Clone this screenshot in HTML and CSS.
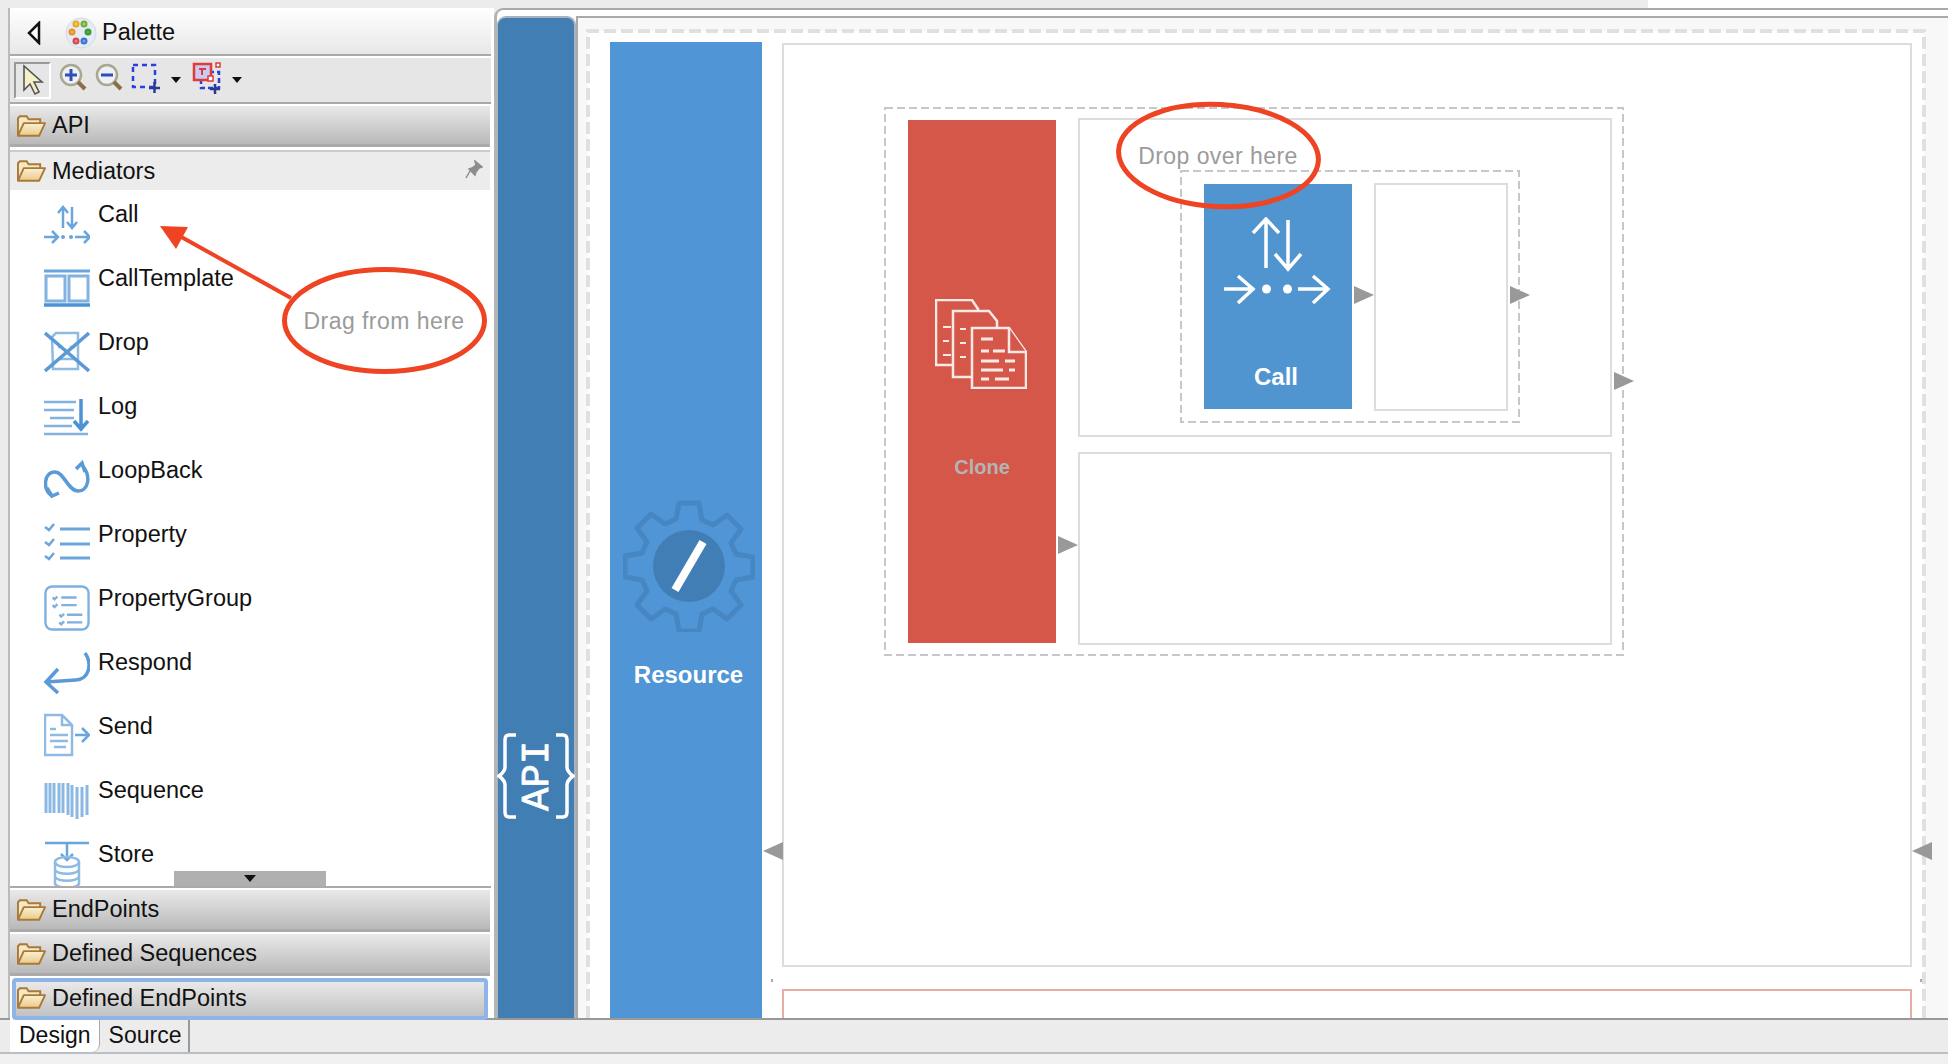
FILE: index.html
```html
<!DOCTYPE html>
<html lang="en">
<head>
    <meta charset="UTF-8" />
    <title>Developer Studio - API Design</title>
    <link rel="stylesheet" href="styles.css">
</head>
<body>

    <svg class="icon-defs" width="0" height="0">
        <defs>
            <linearGradient id="folderFill" x1="0" y1="0" x2="0" y2="1">
                <stop offset="0" stop-color="#fbf1d2"/>
                <stop offset="1" stop-color="#eac98a"/>
            </linearGradient>
            <symbol id="folder" viewBox="0 0 30 24">
                <path d="M1 22V4l2-2h7l2 3h12v4" fill="#f6e8c0" stroke="#a9793a" stroke-width="2"/>
                <path d="M1 22l6-13h22l-6 13z" fill="url(#folderFill)" stroke="#a9793a" stroke-width="2" stroke-linejoin="round"/>
            </symbol>
        </defs>
    </svg>

    <div class="top-strip"><div class="top-strip-fill"></div></div>

    <div class="workspace">
        <aside class="palette">
            <div class="palette-head">
                <svg class="back-arrow" width="14" height="24" viewBox="0 0 14 24"><path d="M12 2v20L2 12z" fill="#fff" stroke="#111" stroke-width="2.500"/></svg>
                <svg class="palette-logo" width="32" height="32" viewBox="0 0 32 32">
                    <circle cx="16" cy="16" r="15" fill="#e6ecf3" stroke="#d3dae2"/>
                    <circle cx="11" cy="7" r="2.500" fill="#f0d060" stroke="#e8a820" stroke-width="2"/>
                    <circle cx="19" cy="7" r="2.500" fill="#a8d070" stroke="#6fae3a" stroke-width="2"/>
                    <circle cx="7" cy="15" r="2.500" fill="#f0b060" stroke="#e8902a" stroke-width="2"/>
                    <circle cx="23" cy="15" r="2.500" fill="#50b040" stroke="#3d9a3a" stroke-width="2"/>
                    <circle cx="11" cy="24" r="2.500" fill="#e88080" stroke="#d04a4a" stroke-width="2"/>
                    <circle cx="19" cy="24" r="2.500" fill="#70a0e8" stroke="#3a74d0" stroke-width="2"/>
                </svg>
                <span>Palette</span>
            </div>
            <div class="palette-tools">
                <div class="tool tool-active">
                    <svg width="24" height="32" viewBox="0 0 24 32"><path d="M3 2v24l6-6 5 10 4-2-5-10h8z" fill="#f4f0c8" stroke="#555" stroke-width="1.600"/></svg>
                </div>
                <svg class="tool-icon" width="28" height="30" viewBox="0 0 28 30">
                    <circle cx="12" cy="12" r="10" fill="#eef0f6" stroke="#a8a88e" stroke-width="2.500"/>
                    <path d="M6 12h12M12 6v12" stroke="#2e4fb5" stroke-width="3"/>
                    <path d="M19 19l7 7" stroke="#8a7048" stroke-width="4"/>
                </svg>
                <svg class="tool-icon" width="28" height="30" viewBox="0 0 28 30">
                    <circle cx="12" cy="12" r="10" fill="#eef0f6" stroke="#a8a88e" stroke-width="2.500"/>
                    <path d="M6 12h12" stroke="#2e4fb5" stroke-width="3"/>
                    <path d="M19 19l7 7" stroke="#8a7048" stroke-width="4"/>
                </svg>
                <svg class="tool-icon" width="30" height="30" viewBox="0 0 30 30">
                    <rect x="2" y="2" width="22" height="22" fill="none" stroke="#2a3fe0" stroke-width="2.500" stroke-dasharray="5 4"/>
                    <path d="M18 25h11M23.500 19v11" stroke="#2a3a90" stroke-width="2.500"/>
                </svg>
                <span class="tool-caret"></span>
                <svg class="tool-icon" width="30" height="32" viewBox="0 0 30 32">
                    <rect x="9" y="10" width="18" height="16" fill="none" stroke="#2a3fe0" stroke-width="2.500" stroke-dasharray="5 3"/>
                    <rect x="2" y="2" width="17" height="16" fill="#c8ccf2" stroke="#e03a3a" stroke-width="2.500"/>
                    <path d="M7 7h7M10 7v6" stroke="#e03a3a" stroke-width="2"/>
                    <rect x="16" y="14" width="5" height="5" fill="#fff" stroke="#e03a3a" stroke-width="1.500"/>
                    <rect x="24" y="1" width="4" height="4" fill="#fff" stroke="#e03a3a" stroke-width="1.500"/>
                    <path d="M18 27h10M23 22v10" stroke="#2a3a90" stroke-width="2.500"/>
                </svg>
                <span class="tool-caret tool-caret-last"></span>
            </div>

            <div class="drawer drawer-first"><svg class="folder"><use href="#folder"/></svg>API</div>

            <div class="drawer drawer-open">
                <svg class="folder"><use href="#folder"/></svg>Mediators
                <svg class="pin" width="18" height="20" viewBox="0 0 18 20"><path d="M10 1l7 6-3 1-3 4-1 3-6-6 3-1 4-3zM5 11l-4 7" fill="#8d8d8d" stroke="#8d8d8d" stroke-width="1.500"/></svg>
            </div>

            <div class="mediators">
                <div class="mediator">
                    <svg class="mediator-icon" viewBox="0 0 46 46"><g stroke="#6aa5dc" stroke-width="2.500" fill="none">
                        <path d="M19 27V6M14 12l5-6 5 6M28 6v21M23 21l5 6 5-6"/>
                        <path d="M0 36h14M8 30l6 6-6 6M31 36h15M40 30l6 6-6 6"/>
                    </g><circle cx="19" cy="36" r="2" fill="#6aa5dc"/><circle cx="27" cy="36" r="2" fill="#6aa5dc"/></svg>
                    <span>Call</span>
                </div>
                <div class="mediator">
                    <svg class="mediator-icon" viewBox="0 0 46 46"><g fill="none" stroke="#82b2e0" stroke-width="3">
                        <path d="M0 6h46" stroke="#6aa5dc"/>
                        <rect x="2" y="11" width="19" height="25"/><rect x="25" y="11" width="19" height="25"/>
                        <path d="M0 40h46" stroke="#4d92d2" stroke-width="3.500"/>
                    </g></svg>
                    <span>CallTemplate</span>
                </div>
                <div class="mediator">
                    <svg class="mediator-icon" viewBox="0 0 46 46"><g fill="none" stroke="#8fbae2" stroke-width="2.500">
                        <path d="M8 8l4-4h22v36H9z"/><path d="M14 18h4M26 18h5M14 30h18"/>
                        <path d="M1 4l44 38M45 4L1 42" stroke="#5a9ad6" stroke-width="3.500"/>
                    </g></svg>
                    <span>Drop</span>
                </div>
                <div class="mediator">
                    <svg class="mediator-icon" viewBox="0 0 46 46"><g fill="none" stroke="#82b2e0" stroke-width="2.500">
                        <path d="M0 9h32M0 17h30M6 25h24M0 33h28M0 41h44"/>
                        <path d="M37 6v30M30 28l7 8 7-8" stroke="#4d92d2" stroke-width="3.500"/>
                    </g></svg>
                    <span>Log</span>
                </div>
                <div class="mediator">
                    <svg class="mediator-icon" viewBox="0 0 46 46"><g fill="none" stroke="#5a9ad6" stroke-width="3.500">
                        <path d="M8 39C-2 32 0 15 11 15c9 0 13 19 23 19 10 0 14-14 4-26"/>
                        <path d="M3 31l5 8 7-3M32 12l6-6 3 9"/>
                    </g></svg>
                    <span>LoopBack</span>
                </div>
                <div class="mediator">
                    <svg class="mediator-icon" viewBox="0 0 46 46"><g fill="none" stroke="#6aa5dc" stroke-width="3">
                        <path d="M16 8h30M16 23h30M16 37h30"/>
                        <path d="M1 6l4 3 5-6M1 21l4 3 5-6M1 35l4 3 5-6" stroke-width="2.500"/>
                    </g></svg>
                    <span>Property</span>
                </div>
                <div class="mediator">
                    <svg class="mediator-icon" viewBox="0 0 48 48"><rect x="1.500" y="1.500" width="45" height="45" rx="7" fill="none" stroke="#7fb0de" stroke-width="2.500"/>
                        <g fill="none" stroke="#7fb0de" stroke-width="2.500">
                            <path d="M18 13h16M18 21h16M24 31h16M24 39h16"/>
                            <path d="M9 13l2 2 3-3M9 21l2 2 3-3M16 31l2 2 3-3M16 39l2 2 3-3"/>
                        </g></svg>
                    <span>PropertyGroup</span>
                </div>
                <div class="mediator">
                    <svg class="mediator-icon" viewBox="0 0 46 46"><path d="M41 4C48 14 46 30 32 31L2 33M14 20L2 33l12 11" fill="none" stroke="#5a9ad6" stroke-width="3.500"/></svg>
                    <span>Respond</span>
                </div>
                <div class="mediator">
                    <svg class="mediator-icon" viewBox="0 0 46 46"><g fill="none" stroke="#8fbae2" stroke-width="2.500">
                        <path d="M1 2h17l10 10v30H1zM18 2v10h10"/>
                        <path d="M6 16h6M6 22h18M6 28h18M10 34h12"/>
                        <path d="M31 22h13M38 15l7 7-7 7" stroke="#6aa5dc"/>
                    </g></svg>
                    <span>Send</span>
                </div>
                <div class="mediator">
                    <svg class="mediator-icon" viewBox="0 0 46 46"><path d="M2 6v30M6 6v30M10 6v30M15 6v30M19 6v30M24 6v32M28 8v32M33 10v32M38 10v30M43 8v30" fill="none" stroke="#8ab8e2" stroke-width="3"/></svg>
                    <span>Sequence</span>
                </div>
                <div class="mediator">
                    <svg class="mediator-icon" viewBox="0 0 46 46"><g fill="none" stroke="#8fbae2" stroke-width="2.500">
                        <path d="M1 2h44" stroke="#6aa5dc"/>
                        <path d="M23 2v17M17 13l6 6 6-6" stroke="#6aa5dc"/>
                        <ellipse cx="23" cy="21" rx="12" ry="5"/>
                        <path d="M11 21v22c4 5 20 5 24 0V21M11 29c4 5 20 5 24 0M11 36c4 5 20 5 24 0"/>
                    </g></svg>
                    <span>Store</span>
                </div>
                <div class="mediators-scroll"><span></span></div>
            </div>

            <div class="drawer-stack">
                <div class="drawer"><svg class="folder"><use href="#folder"/></svg>EndPoints</div>
                <div class="drawer"><svg class="folder"><use href="#folder"/></svg>Defined Sequences</div>
                <div class="drawer drawer-focus"><svg class="folder"><use href="#folder"/></svg>Defined EndPoints</div>
            </div>
        </aside>

        <section class="editor">
            <div class="editor-body">
                <div class="api-band">
                    <svg class="api-mark" width="78" height="86" viewBox="0 0 78 86">
                        <path d="M19 2h-7c-3 0-4 2-4 5v27c0 4-2 6-6 9 4 3 6 5 6 9v27c0 3 1 5 4 5h7M59 2h7c3 0 4 2 4 5v27c0 4 2 6 6 9-4 3-6 5-6 9v27c0 3-1 5-4 5h-7" fill="none" stroke="#fff" stroke-width="3.500"/>
                        <text class="api-mark-text" transform="translate(51 78) rotate(-90)">API</text>
                    </svg>
                </div>
                <div class="canvas">
                    <svg class="canvas-dash" width="1360" height="1000">
                        <path d="M2 1000V13h1336v987" fill="none" stroke="#e0e0e0" stroke-width="4" stroke-dasharray="12 5"/>
                    </svg>

                    <div class="node resource">
                        <svg class="gear" width="132" height="132" viewBox="0 0 132 132">
                            <path d="M56 3h20l3 17 11 5 14-10 14 14-10 14 5 11 17 3v20l-17 3-5 11 10 14-14 14-14-10-11 5-3 17H56l-3-17-11-5-14 10-14-14 10-14-5-11-17-3V56l17-3 5-11-10-14 14-14 14 10 11-5z" fill="#5095d5" stroke="#4686c2" stroke-width="5" stroke-linejoin="round"/>
                            <circle cx="66" cy="66" r="36" fill="#417eb6"/>
                            <path d="M52 90l28-48" stroke="#fff" stroke-width="8"/>
                        </svg>
                        <span class="node-label">Resource</span>
                    </div>

                    <div class="box outer-box"></div>
                    <div class="box fault-box"></div>
                    <span class="tick tick-left"></span>
                    <span class="tick tick-right"></span>

                    <svg class="group-dash group-clone" width="740" height="549"><rect x="1" y="1" width="738" height="547" fill="none" stroke="#c4c8cc" stroke-width="2" stroke-dasharray="8 4"/></svg>

                    <div class="node clone">
                        <svg width="92" height="90" viewBox="0 0 92 90"><g fill="#d5574a" stroke="#fbe9e6" stroke-width="2.500">
                            <path d="M1 1h36l6 9v56H1z"/>
                            <path d="M18 12h36l8 10v56H18z"/>
                            <path d="M37 29h37l17 24v36H37z"/>
                            <path d="M74 29v24h17"/>
                            <path d="M8 28h8M8 42h6M8 56h8M25 30h6M25 44h6M25 58h6" stroke-width="2"/>
                            <path d="M46 40h12M46 52h8M58 52h12M46 62h18M70 62h10M46 71h22M74 71h6M46 80h8M60 80h14" stroke-width="3"/>
                        </g></svg>
                        <span class="node-label">Clone</span>
                    </div>

                    <div class="box branch-top"></div>
                    <div class="box branch-bottom"></div>

                    <svg class="group-dash group-call" width="340" height="253"><rect x="1" y="1" width="338" height="251" fill="none" stroke="#c4c8cc" stroke-width="2" stroke-dasharray="8 4"/></svg>

                    <div class="node call">
                        <svg width="110" height="90" viewBox="0 0 110 90"><g fill="none" stroke="#fff" stroke-width="3.500">
                            <path d="M43 51V2M30 16L43 2l13 14M65 3v49M52 37l13 15 13-15"/>
                            <path d="M1 72h30M15 59l15 13-15 14M75 72h30M90 59l15 13-15 14"/>
                        </g><circle cx="43.500" cy="72" r="4.500" fill="#fff"/><circle cx="64.500" cy="72" r="4.500" fill="#fff"/></svg>
                        <span class="node-label">Call</span>
                    </div>

                    <div class="box call-next"></div>

                    <span class="link-arrow arrow-right arrow-call"></span>
                    <span class="link-arrow arrow-right arrow-call-out"></span>
                    <span class="link-arrow arrow-right arrow-branch"></span>
                    <span class="link-arrow arrow-right arrow-clone"></span>
                    <span class="link-arrow arrow-left arrow-res-in"></span>
                    <span class="link-arrow arrow-left arrow-res-out"></span>
                </div>
            </div>
        </section>
    </div>

    <div class="tab-bar">
        <div class="tab tab-active">Design</div>
        <div class="tab">Source</div>
    </div>
    <div class="status-strip"></div>

    <!-- red notes drawn over the screenshot -->
    <svg class="notes" width="1948" height="1064" viewBox="0 0 1948 1064">
        <path d="M291 298L176 234" fill="none" stroke="#ee4423" stroke-width="4"/>
        <path d="M160 226l28 1-12 22z" fill="#ee4423"/>
        <ellipse cx="384.500" cy="320.500" rx="100" ry="51" fill="none" stroke="#ee4423" stroke-width="5"/>
        <ellipse cx="1218.500" cy="155.500" rx="100" ry="51" transform="rotate(3 1218.500 155.500)" fill="none" stroke="#ee4423" stroke-width="5"/>
        <text class="note-text" x="384" y="329" text-anchor="middle">Drag from here</text>
        <text class="note-text" x="1218" y="164" text-anchor="middle">Drop over here</text>
    </svg>

</body>
</html>
```

FILE: styles.css
```css
* {
    box-sizing: border-box;
}
html, body {
    margin: 0;
    padding: 0;
}
body {
    position: relative;
    width: 1948px;
    height: 1064px;
    overflow: hidden;
    background-color: #f0f0f0;
    font-family: 'Liberation Sans', Arial, sans-serif;
    color: #111;
}
.icon-defs {
    position: absolute;
}
.top-strip {
    display: flex;
    justify-content: flex-end;
    height: 8px;
    background-color: #ececec;
}
.top-strip-fill {
    width: 300px;
    background-color: #fff;
}
.workspace {
    display: flex;
    height: 1010px;
    background-color: #ececec;
}

/* palette */
.palette {
    display: flex;
    flex-direction: column;
    flex: none;
    width: 486px;
    margin-left: 8px;
    border-left: 2px solid #bbb;
    border-right: 3px solid #fff;
    background-color: #fff;
}
.palette-head {
    display: flex;
    align-items: center;
    flex: none;
    height: 46px;
    padding: 3px 0 0 17px;
    font-size: 23.5px;
    background: linear-gradient(#fff, #e8e8e8);
}
.back-arrow {
    margin-top: 1px;
}
.palette-logo {
    margin: 0 5px 0 24px;
}
.palette-tools {
    display: flex;
    align-items: center;
    flex: none;
    height: 50px;
    margin-bottom: 2px;
    padding: 2px 0 0 4px;
    border-top: 2px solid #aaa;
    border-bottom: 2px solid #aaa;
    box-shadow: inset 0 2px 0 #fff;
    background-color: #e6e6e6;
}
.tool {
    display: flex;
    align-items: center;
    justify-content: center;
    width: 37px;
    height: 37px;
    border: 2px solid;
    border-color: #999 #fff #fff #999;
}
.tool-icon {
    margin: -4px 0 0 8px;
}
.tool-caret {
    width: 0;
    height: 0;
    margin: 0 3px 0 10px;
    border-left: 5px solid transparent;
    border-right: 5px solid transparent;
    border-top: 6px solid #111;
}
.drawer {
    position: relative;
    display: flex;
    align-items: center;
    flex: none;
    width: 480px;
    height: 41px;
    font-size: 23.5px;
    border-bottom: 3px solid #aaa;
    background: linear-gradient(#e9e9e9, #b9b9b9);
}
.drawer-first {
    padding-top: 1px;
}
.folder {
    width: 29px;
    height: 24px;
    margin: 0 6px 0 7px;
}
.drawer-open {
    height: 40px;
    margin-top: 3px;
    border-top: 2px solid #ccc;
    border-bottom: 0;
    background: #ececec;
}
.pin {
    position: absolute;
    right: 7px;
    top: 8px;
}
.mediators {
    position: relative;
    flex: none;
    height: 696px;
    padding-top: 2px;
    overflow: hidden;
}
.mediator {
    display: flex;
    align-items: flex-start;
    height: 64px;
    padding-left: 34px;
    font-size: 23.5px;
}
.mediator-icon {
    width: 46px;
    height: 46px;
    margin: 9px 8px 0 0;
    flex: none;
}
.mediator span {
    margin-top: 9px;
    line-height: 26px;
}
.mediators-scroll {
    position: absolute;
    left: 164px;
    bottom: 0;
    display: flex;
    justify-content: center;
    align-items: center;
    width: 152px;
    height: 15px;
    background-color: #b0b0b0;
}
.mediators-scroll span {
    width: 0;
    height: 0;
    border-left: 6px solid transparent;
    border-right: 6px solid transparent;
    border-top: 7px solid #111;
}
.drawer-stack {
    display: flex;
    flex-direction: column;
    flex: none;
    padding-top: 2px;
    border-top: 2px solid #aaa;
}
.drawer-stack .drawer {
    height: 42px;
    margin-bottom: 2px;
}
.drawer-stack .drawer-focus {
    width: 476px;
    height: 42px;
    margin: 0 0 0 2px;
    padding-bottom: 2px;
    border: 4px solid #8eb4e8;
    border-radius: 4px;
    background: linear-gradient(#e9e9e9, #c2c2c2);
}
.drawer-focus .folder {
    margin-left: 1px;
}

/* editor */
.editor {
    display: flex;
    flex-direction: column;
    flex: 1;
    min-width: 0;
    border-top: 2px solid #aaa;
    border-left: 3px solid #b5b5b5;
    border-top-left-radius: 9px;
    background-color: #fff;
}
.editor-body {
    display: flex;
    flex: 1;
    min-height: 0;
    margin-top: 6px;
}
.api-band {
    display: flex;
    align-items: flex-end;
    justify-content: center;
    flex: none;
    width: 79px;
    padding: 0 1px 199px 0;
    border: solid #a9b2bc;
    border-width: 2px 2px 0 1px;
    border-radius: 9px 9px 0 0;
    background-color: #417eb4;
}
.api-mark {
    flex: none;
}
.api-mark-text {
    font-family: 'Liberation Mono', monospace;
    font-size: 39px;
    fill: #fff;
    stroke: #fff;
    stroke-width: 0.8px;
}
.canvas {
    position: relative;
    flex: 1;
    min-width: 0;
    overflow: hidden;
    border-top: 2px solid #aaa;
    border-left: 2px solid #aaa;
    background-color: #f8f8f8;
}
/* white drawing area inside the big dashed frame */
.canvas::before {
    content: "";
    position: absolute;
    left: 10px;
    top: 13px;
    width: 1336px;
    height: 1000px;
    background-color: #fff;
}
.canvas-dash {
    position: absolute;
    left: 8px;
    top: 0;
}

/* diagram nodes, placed on the free canvas */
.node, .box, .group-dash, .link-arrow, .tick {
    position: absolute;
}
.node {
    display: flex;
    flex-direction: column;
    align-items: center;
}
.node-label {
    color: #fff;
    font-weight: bold;
}
.box {
    border: 2px solid #ddd;
    background-color: #fff;
}
.tick {
    top: 961px;
    width: 2px;
    height: 3px;
    background-color: #aaa;
}
.tick-left {
    left: 193px;
}
.tick-right {
    left: 1342px;
}
.resource {
    left: 32px;
    top: 24px;
    width: 152px;
    height: 1000px;
    background-color: #5096d6;
}
.gear {
    margin-top: 458px;
    margin-left: 5px;
}
.resource .node-label {
    margin: 29px 0 0 5px;
    font-size: 24px;
}
.outer-box {
    left: 204px;
    top: 25px;
    width: 1130px;
    height: 924px;
}
.fault-box {
    left: 204px;
    top: 971px;
    width: 1130px;
    height: 60px;
    border-color: #e8aea6;
}
.group-clone {
    left: 306px;
    top: 89px;
}
.clone {
    left: 330px;
    top: 102px;
    width: 148px;
    height: 523px;
    background-color: #d5574a;
}
.clone svg {
    margin-top: 179px;
    margin-left: -3px;
}
.clone .node-label {
    margin-top: 67px;
    font-size: 20px;
    color: #b4b4b4;
}
.branch-top {
    left: 500px;
    top: 100px;
    width: 534px;
    height: 319px;
}
.branch-bottom {
    left: 500px;
    top: 434px;
    width: 534px;
    height: 193px;
}
.group-call {
    left: 602px;
    top: 152px;
}
.call {
    left: 626px;
    top: 166px;
    width: 148px;
    height: 225px;
    background-color: #5195d0;
}
.call svg {
    margin-top: 33px;
}
.call .node-label {
    margin: 56px 4px 0 0;
    font-size: 24px;
}
.call-next {
    left: 796px;
    top: 165px;
    width: 134px;
    height: 228px;
}
.link-arrow {
    width: 0;
    height: 0;
    border-top: 9px solid transparent;
    border-bottom: 9px solid transparent;
}
.arrow-right {
    border-left: 20px solid #999;
}
.arrow-left {
    border-right: 20px solid #999;
}
.arrow-call {
    left: 776px;
    top: 268px;
}
.arrow-call-out {
    left: 932px;
    top: 268px;
}
.arrow-branch {
    left: 1036px;
    top: 354px;
}
.arrow-clone {
    left: 480px;
    top: 518px;
}
.arrow-res-in {
    left: 185px;
    top: 824px;
}
.arrow-res-out {
    left: 1334px;
    top: 824px;
}

/* bottom tabs */
.tab-bar {
    display: flex;
    height: 36px;
    padding: 0 0 0 10px;
    border-top: 2px solid #999;
    border-bottom: 2px solid #b9bfc4;
    background-color: #ececec;
    font-size: 23px;
}
.tab {
    display: flex;
    align-items: center;
    padding: 0 7px 2px 9px;
    border-right: 2px solid #999;
}
.tab-active {
    margin-top: -2px;
    padding: 2px 8px 2px 9px;
    border-right: 1px solid #aaa;
    border-bottom-right-radius: 8px;
    background-color: #fff;
}
.status-strip {
    height: 10px;
    background-color: #f0f0f0;
}

/* annotations */
.notes {
    position: absolute;
    left: 0;
    top: 0;
}
.note-text {
    font-family: 'Liberation Sans', Arial, sans-serif;
    font-size: 23px;
    letter-spacing: 0.450px;
    fill: #9b9b9b;
}
```
